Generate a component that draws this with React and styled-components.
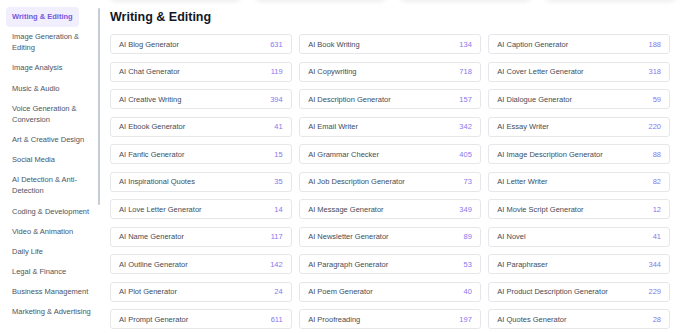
import styled, { createGlobalStyle } from "styled-components";

const categories = [
    "Writing & Editing",
    "Image Generation & Editing",
    "Image Analysis",
    "Music & Audio",
    "Voice Generation & Conversion",
    "Art & Creative Design",
    "Social Media",
    "AI Detection & Anti-Detection",
    "Coding & Development",
    "Video & Animation",
    "Daily Life",
    "Legal & Finance",
    "Business Management",
    "Marketing & Advertising",
];

const tools = [
    ["AI Blog Generator", 631],
    ["AI Book Writing", 134],
    ["AI Caption Generator", 188],
    ["AI Chat Generator", 119],
    ["AI Copywriting", 718],
    ["AI Cover Letter Generator", 318],
    ["AI Creative Writing", 394],
    ["AI Description Generator", 157],
    ["AI Dialogue Generator", 59],
    ["AI Ebook Generator", 41],
    ["AI Email Writer", 342],
    ["AI Essay Writer", 220],
    ["AI Fanfic Generator", 15],
    ["AI Grammar Checker", 405],
    ["AI Image Description Generator", 88],
    ["AI Inspirational Quotes", 35],
    ["AI Job Description Generator", 73],
    ["AI Letter Writer", 82],
    ["AI Love Letter Generator", 14],
    ["AI Message Generator", 349],
    ["AI Movie Script Generator", 12],
    ["AI Name Generator", 117],
    ["AI Newsletter Generator", 89],
    ["AI Novel", 41],
    ["AI Outline Generator", 142],
    ["AI Paragraph Generator", 53],
    ["AI Paraphraser", 344],
    ["AI Plot Generator", 24],
    ["AI Poem Generator", 40],
    ["AI Product Description Generator", 229],
    ["AI Prompt Generator", 611],
    ["AI Proofreading", 197],
    ["AI Quotes Generator", 28],
];

const App = () => {
    return (
        <>
            <GlobalStyle />
            <Page>
                <Sidebar>
                    <Nav>
                        {categories.map((name, index) => (
                            <NavItem key={name} active={index === 0}>
                                {name}
                            </NavItem>
                        ))}
                    </Nav>
                    <Track>
                        <Thumb />
                    </Track>
                </Sidebar>
                <Main>
                    <FeaturedStrip>
                        {[0, 1, 2, 3].map((i) => (
                            <Featured key={i} />
                        ))}
                    </FeaturedStrip>
                    <Title>Writing &amp; Editing</Title>
                    <Grid>
                        {tools.map(([name, count]) => (
                            <Card key={name}>
                                <CardName>{name}</CardName>
                                <Count>{count}</Count>
                            </Card>
                        ))}
                    </Grid>
                </Main>
            </Page>
        </>
    );
};

export default App;

const GlobalStyle = createGlobalStyle`
    body {
        margin: 0;
        background: #fff;
        font-family: "Liberation Sans", Arial, sans-serif;
        overflow: hidden;
    }
`;

const Page = styled.div`
    display: flex;
    width: 680px;
    height: 333px;
    overflow: hidden;
`;

const Sidebar = styled.aside`
    width: 101px;
    flex-shrink: 0;
    display: flex;
    padding-top: 7px;
    box-sizing: border-box;
`;

const Nav = styled.nav`
    flex: 1;
    display: flex;
    flex-direction: column;
    align-items: flex-start;
    padding-left: 6px;
`;

const NavItem = styled.div`
    padding: 4px 6px 5.2px;
    font-size: 7.5px;
    line-height: 11px;
    border-radius: 4px;
    color: ${(props) => (props.active ? "#7358e0" : "#4b5563")};
    background: ${(props) => (props.active ? "#f1eefd" : "transparent")};
    font-weight: ${(props) => (props.active ? 700 : 400)};
`;

const Track = styled.div`
    width: 3px;
    padding-top: 1px;
`;

const Thumb = styled.div`
    width: 2px;
    height: 197px;
    border-radius: 2px;
    background: #c7ccd4;
`;

const Main = styled.main`
    flex: 1;
    min-width: 0;
    padding: 0 10px 0 9px;
    display: flex;
    flex-direction: column;
`;

const FeaturedStrip = styled.div`
    display: flex;
    gap: 12px;
    height: 30px;
    margin-top: -30px;
    margin-left: -1px;
`;

const Featured = styled.div`
    width: 133px;
    flex-shrink: 0;
    border-radius: 8px;
    background: #fff;
    box-shadow: 0 2px 5px rgba(0, 0, 0, 0.07);
`;

const Title = styled.h1`
    margin: 9px 0 9px;
    font-size: 12.5px;
    line-height: 16px;
    font-weight: 700;
    color: #111827;
`;

const Grid = styled.div`
    display: grid;
    grid-template-columns: repeat(3, minmax(0, 1fr));
    column-gap: 7.5px;
    row-gap: 7.5px;
`;

const Card = styled.div`
    height: 20px;
    box-sizing: border-box;
    display: flex;
    align-items: center;
    justify-content: space-between;
    padding: 0 8px;
    border: 1px solid #e5e7eb;
    border-radius: 3px;
    background: #fff;
`;

const CardName = styled.span`
    font-size: 7.5px;
    color: #444c58;
    white-space: nowrap;
`;

const Count = styled.span`
    font-size: 7.5px;
    color: #8877ee;
`;
